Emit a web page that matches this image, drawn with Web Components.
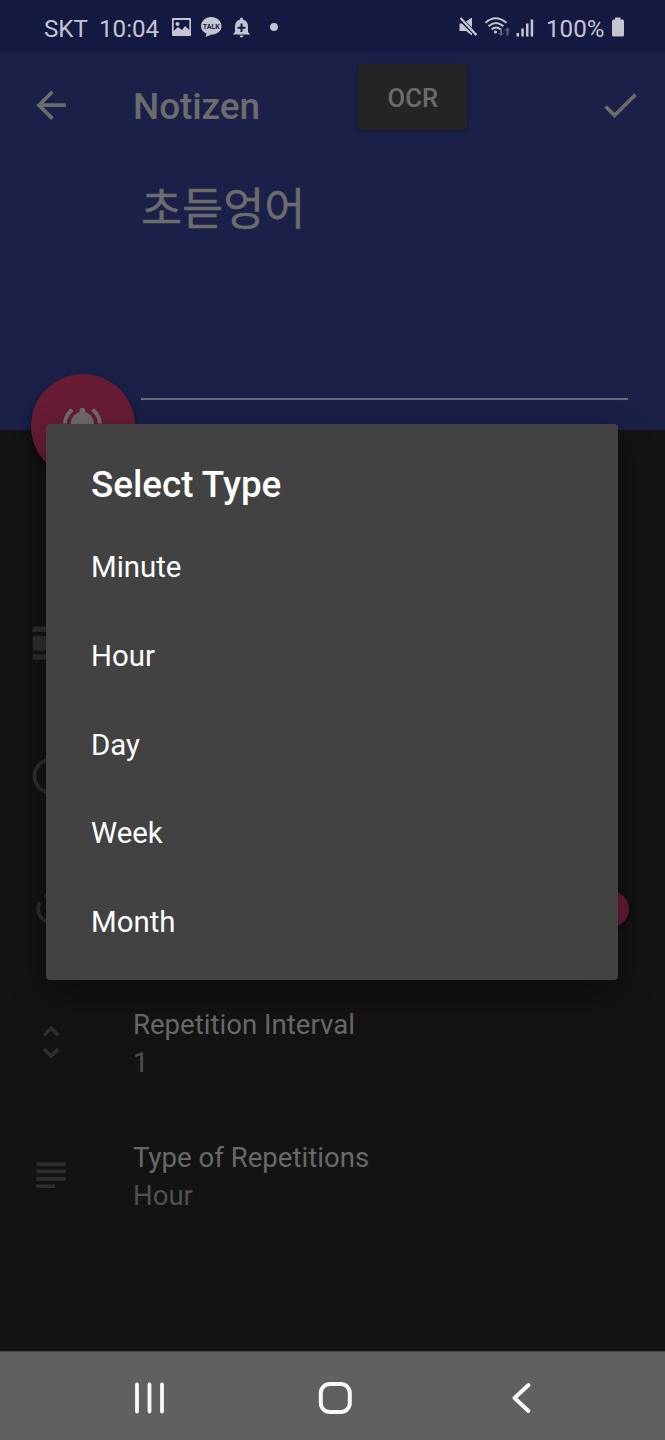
<!DOCTYPE html>
<html lang="de">
<head>
<meta charset="utf-8">
<title>Notizen</title>
<style>
html, body { margin: 0; background: #131313; }
body { width: 665px; height: 1440px; overflow: hidden; font-family: Roboto, "Noto Sans CJK KR", sans-serif; }
</style>
</head>
<body>
<reminder-app></reminder-app>
<script>
const ICONS = {
  back: '<path d="M20 11H7.83l5.59-5.59L12 4l-8 8 8 8 1.41-1.41L7.83 13H20v-2z"/>',
  check: '<path d="M9 16.17L4.83 12l-1.42 1.41L9 19 21 7l-1.41-1.41z"/>',
  bell: '<path d="M7.58 4.08L6.15 2.65C3.75 4.48 2.17 7.3 2.03 10.5h2c.15-2.65 1.51-4.97 3.55-6.42zm12.39 6.42h2c-.15-3.2-1.73-6.02-4.12-7.85l-1.42 1.43c2.02 1.45 3.39 3.77 3.54 6.42zM18 11c0-3.07-1.64-5.64-4.5-6.32V4c0-.83-.67-1.5-1.5-1.5s-1.5.67-1.5 1.5v.68C7.63 5.36 6 7.92 6 11v5l-2 2v1h16v-1l-2-2v-5z"/>',
  day: '<path d="M2 21h19v-3H2v3zM20 8H3c-.55 0-1 .45-1 1v6c0 .55.45 1 1 1h17c.55 0 1-.45 1-1V9c0-.55-.45-1-1-1zM2 3v3h19V3H2z"/>',
  clock: '<path d="M12 2C6.48 2 2 6.48 2 12s4.48 10 10 10 10-4.48 10-10S17.52 2 12 2zm0 18c-4.42 0-8-3.58-8-8s3.58-8 8-8 8 3.58 8 8-3.58 8-8 8zm.5-13H11v6l5.25 3.15.75-1.23-4.5-2.67z"/>',
  repeat: '<path d="M12 4V1L8 5l4 4V6c3.31 0 6 2.69 6 6 0 1.01-.25 1.97-.7 2.8l1.46 1.46C19.54 15.03 20 13.57 20 12c0-4.42-3.58-8-8-8zm0 14c-3.31 0-6-2.69-6-6 0-1.01.25-1.97.7-2.8L5.24 7.74C4.46 8.97 4 10.43 4 12c0 4.42 3.58 8 8 8v3l4-4-4-4v3z"/>',
  unfold: '<path d="M12 5.83L15.17 9l1.41-1.41L12 3 7.41 7.59 8.83 9 12 5.83zm0 12.34L8.83 15l-1.41 1.41L12 21l4.59-4.59L15.17 15 12 18.17z"/>',
  subject: '<path d="M14 17H4v2h10v-2zm6-8H4v2h16V9zM4 15h16v-2H4v2zM4 5v2h16V5H4z"/>'
};
class AppIcon extends HTMLElement {
  connectedCallback() {
    this.attachShadow({ mode: 'open' }).innerHTML = `
      <style>:host{display:block;flex:none;width:44.3px;height:44.3px}svg{display:block;width:100%;height:100%;fill:currentColor}</style>
      <svg viewBox="0 0 24 24">${ICONS[this.getAttribute('name')]}</svg>`;
  }
}
customElements.define('app-icon', AppIcon);

class StatusBar extends HTMLElement {
  connectedCallback() {
    this.attachShadow({ mode: 'open' }).innerHTML = `
      <style>
        :host{display:flex;box-sizing:border-box;height:53px;padding:4px 40px 0 44px;align-items:center;background:#141941;color:#c4c5d0;font-size:24.2px;white-space:pre}
        svg{display:block;flex:none;fill:currentColor;margin-top:-2px}
        .time{margin-left:11px;width:71px}
        .right{margin-left:auto;display:flex;align-items:center}
        .net text{font:bold 7.5px Roboto;fill:#141941}
      </style>
      <span>SKT</span><span class="time">10:04</span>
      <svg class="net" width="110" height="24" viewBox="170 16 110 24">
        <path fill-rule="evenodd" d="M173 18h17q1 0 1 1v16q0 1-1 1h-17q-1 0-1-1V19q0-1 1-1zm.7 2v11l4.3-4 4 3 3-4 4.3 4V20z"/><circle cx="177.5" cy="24" r="2"/>
        <path d="M211 17c6 0 10.500 4 10.500 9s-4.500 8.700-10.500 8.700l-5.500 2.300 1-3.300c-3.500-1.500-5.500-4.300-5.500-7.700 0-5 4.500-9 10-9z"/>
        <text x="202.800" y="28.700" textLength="17" lengthAdjust="spacingAndGlyphs">TALK</text>
        <path fill-rule="evenodd" d="M241.500 17.500q1.500 0 1.500 2 5 1.500 5 7v5.500l2 2.500h-17l2-2.500v-5.500q0-5.500 5-7 0-2 1.500-2zm-1 6v3.200h-3v2h3v3.300h2v-3.300h3v-2h-3v-3.200zM239.500 35.500h4q-.5 2-2 2t-2-2z"/>
        <circle cx="274" cy="27" r="3.900"/>
      </svg>
      <div class="right">
        <svg width="80" height="24" viewBox="457 16 80 24">
          <path d="M459.500 23.500h2.500l10 10v2l-6-4.500h-6.500zM466 21.500l6-4v10zM459.800 18.800l1.500-1.500 16 17-1.700 1.700z"/>
          <g fill="none" stroke="currentColor" stroke-width="2"><path d="M485.500 22.700q10-9 21 0M488.500 26.300q7.500-6.500 15 0M491.500 29.300q4.500-3.500 9 0"/></g><circle cx="495.500" cy="32" r="1.600"/>
          <path opacity=".4" d="M500 28h2v5h2l-3 3-3-3h2zM506.500 35.500h2v-5h2l-3-3-3 3h2z"/>
          <path d="M516.500 33h2.600v3.500h-2.600zM521.300 28.500h2.500v8h-2.500zM526 23.500h2.500v13h-2.500zM530.700 19.500h2.500v17h-2.500z"/>
        </svg>
        <span style="margin-left:9px;width:64px">100%</span>
        <svg width="15" height="24" viewBox="610 16 15 24"><path d="M615 17.500h5.500v2h2q1.500 0 1.500 1.500v14q0 1.500-1.500 1.500h-9q-1.500 0-1.500-1.500V21q0-1.500 1.500-1.500h1.500z"/></svg>
      </div>`;
  }
}
customElements.define('status-bar', StatusBar);

class NoteHeader extends HTMLElement {
  connectedCallback() {
    this.attachShadow({ mode: 'open' }).innerHTML = `
      <style>
        :host{display:block;position:relative;height:377px;background:#1a2047;color:#6c6b6e}
        .bar{display:flex;box-sizing:border-box;align-items:center;height:103px;padding:1px 22.500px 0 29.200px}
        h1{margin:3px 0 0 59.500px;width:225.300px;font-size:37px;font-weight:500;line-height:44px;letter-spacing:-.1px}
        button{all:unset;box-sizing:border-box;width:109px;height:66px;margin-top:-16px;padding-top:2px;border-radius:4px;background:#242424;color:#6c6c6c;text-align:center;font-size:25.600px;font-weight:500;box-shadow:0 1px 3px #0005}
        .check{margin-left:auto}
        .field{box-sizing:border-box;margin-left:141px;width:487px;height:244px;border-bottom:2px solid #6a6b78;padding-top:22px;font-size:44.700px;line-height:64px;-webkit-text-stroke:.4px currentColor}
        .fab{position:absolute;left:31px;top:321px;width:104px;height:104px;border-radius:50%;background:#671b35;display:grid;place-items:center;box-shadow:0 5px 10px #0007}
        .fab app-icon{width:46.800px;height:46.800px;margin-left:-1px}
      </style>
      <div class="bar"><app-icon name="back"></app-icon><h1>Notizen</h1><button>OCR</button><app-icon class="check" name="check"></app-icon></div>
      <div class="field">초듣엉어</div>
      <div class="fab"><app-icon name="bell"></app-icon></div>`;
  }
}
customElements.define('note-header', NoteHeader);

class SettingRow extends HTMLElement {
  connectedCallback() {
    this.attachShadow({ mode: 'open' }).innerHTML = `
      <style>
        :host{display:flex;align-items:center;height:132.900px;padding:0 36px 0 29.200px;color:#2e2e2e}
        .text{margin:3px 0 0 59.500px;font-size:27.600px;line-height:37.500px;color:#505050}
        ::slotted([slot=title]){color:#696969}
        ::slotted([slot=end]){margin-left:auto}
      </style>
      <app-icon name="${this.getAttribute('icon')}"></app-icon>
      <div class="text"><slot name="title"></slot><slot></slot></div><slot name="end"></slot>`;
  }
}
customElements.define('setting-row', SettingRow);

class TypeDialog extends HTMLElement {
  connectedCallback() {
    this.attachShadow({ mode: 'open' }).innerHTML = `
      <style>
        :host{position:absolute;left:46px;top:424px;width:572.400px;height:556px;box-sizing:border-box;padding:39px 45px 0;border-radius:4px;background:#424242;color:#fff;box-shadow:0 14px 34px 2px #0005}
        h2{margin:0;font-size:36.800px;font-weight:500;line-height:44px;height:60.400px}
        ::slotted(div){height:88.600px;line-height:88.600px;font-size:29.400px}
      </style><h2>Select Type</h2><slot></slot>`;
  }
}
customElements.define('type-dialog', TypeDialog);

class NavBar extends HTMLElement {
  connectedCallback() {
    this.attachShadow({ mode: 'open' }).innerHTML = `
      <style>:host{display:flex;box-sizing:border-box;height:89px;border-top:1px solid #484848;background:#606060;align-items:center;justify-content:space-between;padding:3px 124px 0 129px}
      svg{display:block;fill:none;stroke:#f8f8f8;stroke-width:4;stroke-linecap:round;stroke-linejoin:round}</style>
      <svg width="40" height="36" viewBox="0 0 40 36"><path stroke-width="3.800" d="M8 4.500v27M20.500 4.500v27M33 4.500v27"/></svg>
      <svg width="40" height="36" viewBox="0 0 40 36"><rect x="5.800" y="4" width="29" height="28" rx="9"/></svg>
      <svg width="40" height="36" viewBox="0 0 40 36"><path d="M27.500 5L13.500 18l14 13"/></svg>`;
  }
}
customElements.define('nav-bar', NavBar);

class ReminderApp extends HTMLElement {
  connectedCallback() {
    this.attachShadow({ mode: 'open' }).innerHTML = `
      <style>
        :host{display:flex;flex-direction:column;position:relative;width:665px;height:1440px;background:#131313}
        main{flex:1;padding-top:147px}
        .thumb{width:36px;height:36px;border-radius:50%;background:#641a37;box-shadow:0 2px 4px #0008}
      </style>
      <status-bar></status-bar><note-header></note-header>
      <main>
        <setting-row icon="day"></setting-row>
        <setting-row icon="clock"></setting-row>
        <setting-row icon="repeat"><div class="thumb" slot="end"></div></setting-row>
        <setting-row icon="unfold"><div slot="title">Repetition Interval</div><div>1</div></setting-row>
        <setting-row icon="subject"><div slot="title">Type of Repetitions</div><div>Hour</div></setting-row>
      </main>
      <nav-bar></nav-bar>
      <type-dialog><div>Minute</div><div>Hour</div><div>Day</div><div>Week</div><div>Month</div></type-dialog>`;
  }
}
customElements.define('reminder-app', ReminderApp);
</script>
</body>
</html>
